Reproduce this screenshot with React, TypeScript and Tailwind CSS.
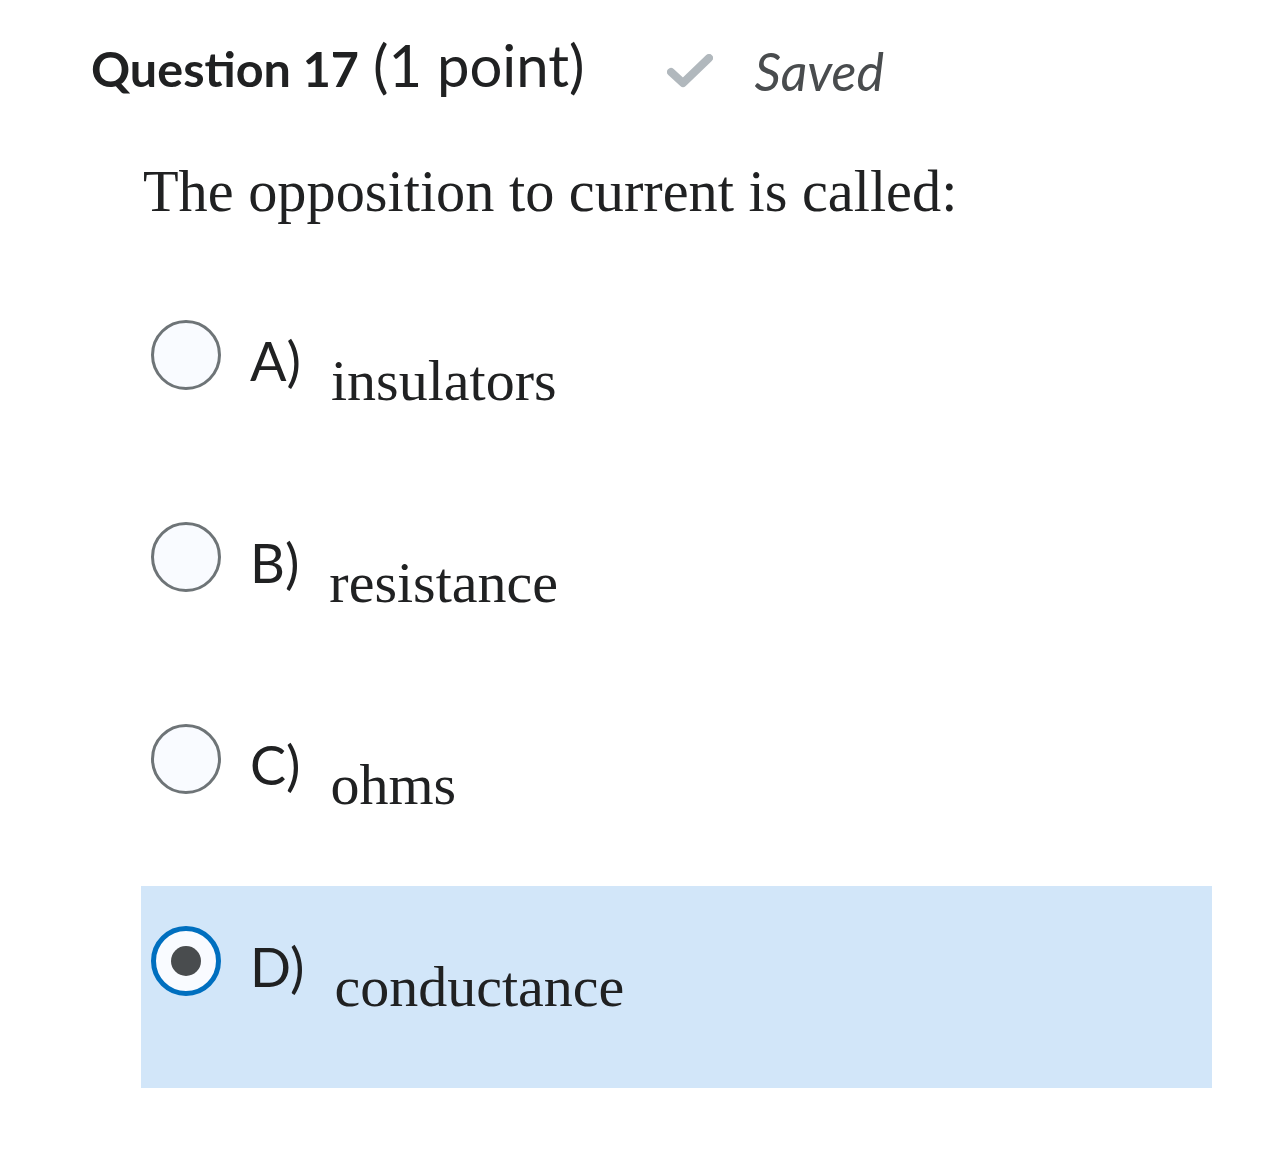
const options = [
  { key: "A)", text: "insulators" },
  { key: "B)", text: "resistance" },
  { key: "C)", text: "ohms" },
  { key: "D)", text: "conductance" },
];

const selected = "D)";

function Radio({ checked }: { checked: boolean }) {
  if (checked) {
    return (
      <div className="w-[70px] h-[70px] shrink-0 rounded-full border-[5px] border-[#006fbf] bg-[#f9fbff] flex items-center justify-center">
        <div className="w-[30px] h-[30px] rounded-full bg-[#494c4e]" />
      </div>
    );
  }
  return <div className="w-[70px] h-[70px] shrink-0 rounded-full border-[3px] border-[#6e7477] bg-[#f9fbff]" />;
}

export default function App() {
  return (
    <div className="min-h-screen bg-white text-[#202122] pl-[91px] pt-[30px]">
      {/* header */}
      <div className="flex items-baseline font-['Lato',sans-serif] h-[70px]">
        <span className="text-[48.5px] font-bold leading-[70px]">Question 17</span>
        <span className="text-[58px] ml-[14px] leading-[70px]">(1 point)</span>
        <svg className="ml-[83px] self-center mt-[12px]" width="46" height="34" viewBox="0 0 46 34">
          <path d="M4 18 L16 29 L42 4" fill="none" stroke="#b1b8bd" strokeWidth="8" strokeLinecap="round" strokeLinejoin="round" />
        </svg>
        <span className="relative top-[4px] ml-[41px] text-[52px] italic text-[#494c4e] leading-[70px]">Saved</span>
      </div>

      {/* question */}
      <p className="ml-[52px] mt-[63px] font-['Liberation_Serif',serif] text-[58.3px] leading-none">
        The opposition to current is called:
      </p>

      {/* options */}
      <div className="ml-[50px] mt-[59px] w-[1071px]">
        {options.map((o) => {
          const checked = o.key === selected;
          return (
            <div
              key={o.key}
              className={
                "h-[202px] flex items-start pt-[40px] pl-[10px] " + (checked ? "bg-[#d2e6f9]" : "")
              }
            >
              <Radio checked={checked} />
              <span className="ml-[29px] mt-[6px] font-['Lato',sans-serif] text-[54px] leading-[70px]">{o.key}</span>
              <span className="ml-[30px] mt-[32px] font-['Liberation_Serif',serif] text-[58px] leading-none">
                {o.text}
              </span>
            </div>
          );
        })}
      </div>
    </div>
  );
}
